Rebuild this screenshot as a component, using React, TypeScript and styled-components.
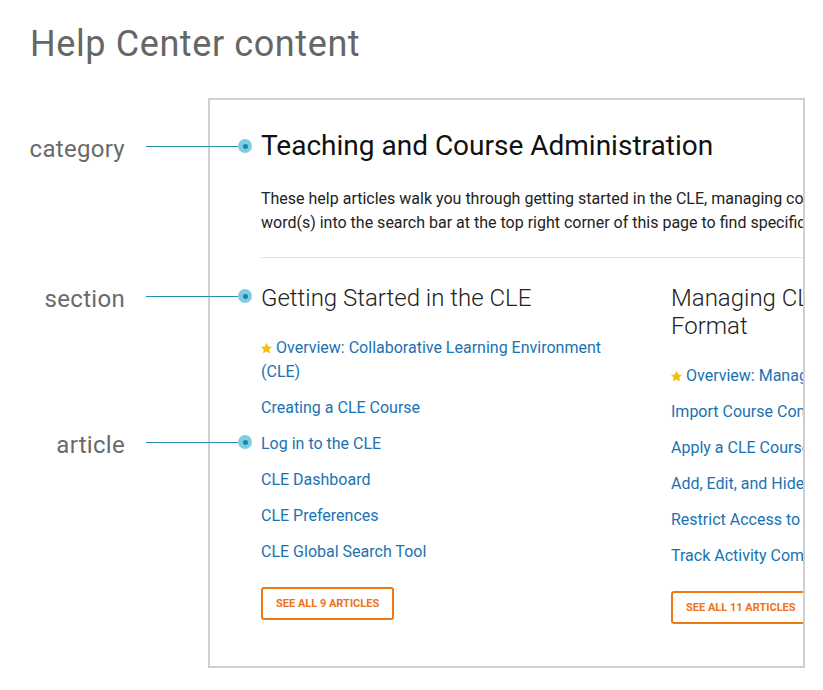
import React from "react";
import styled, { createGlobalStyle } from "styled-components";

interface Section {
  title: string;
  articles: { title: string; promoted?: boolean }[];
  total: number;
}

const sections: Section[] = [
  {
    title: "Getting Started in the CLE",
    total: 9,
    articles: [
      { title: "Overview: Collaborative Learning Environment (CLE)", promoted: true },
      { title: "Creating a CLE Course" },
      { title: "Log in to the CLE" },
      { title: "CLE Dashboard" },
      { title: "CLE Preferences" },
      { title: "CLE Global Search Tool" },
    ],
  },
  {
    title: "Managing CLE Course Content and Format",
    total: 11,
    articles: [
      { title: "Overview: Managing Course Content", promoted: true },
      { title: "Import Course Content" },
      { title: "Apply a CLE Course Template" },
      { title: "Add, Edit, and Hide Content" },
      { title: "Restrict Access to Activities" },
      { title: "Track Activity Completion" },
    ],
  },
];

const annotations = [
  { label: "category", top: 34 },
  { label: "section", top: 184 },
  { label: "article", top: 330 },
];

const Star = () => (
  <StarIcon viewBox="0 0 24 24" aria-hidden>
    <path d="M12 1.5l3.1 6.6 7.1.9-5.2 4.9 1.4 7.1L12 17.5 5.6 21l1.4-7.1L1.8 9l7.1-.9z" />
  </StarIcon>
);

const App: React.FC = () => {
  return (
    <>
      <GlobalStyle />
      <Page>
        <Title>Help Center content</Title>
        <Canvas>
          <Frame>
            <CategoryTitle>Teaching and Course Administration</CategoryTitle>
            <Description>
              These help articles walk you through getting started in the CLE, managing course content, grading, and more. Type key
              <br />
              word(s) into the search bar at the top right corner of this page to find specific articles.
            </Description>
            <Divider />
            <Sections>
              {sections.map((section) => (
                <SectionBlock key={section.title}>
                  <SectionTitle>{section.title}</SectionTitle>
                  <ArticleList>
                    {section.articles.map((article) => (
                      <ArticleItem key={article.title}>
                        <ArticleLink href="#">
                          {article.promoted && <Star />}
                          {article.title}
                        </ArticleLink>
                      </ArticleItem>
                    ))}
                  </ArticleList>
                  <SeeAll>See all {section.total} articles</SeeAll>
                </SectionBlock>
              ))}
            </Sections>
          </Frame>
          {annotations.map((a) => (
            <Annotation key={a.label} style={{ top: a.top }}>
              <AnnotationLabel>{a.label}</AnnotationLabel>
              <Pointer />
              <Dot />
            </Annotation>
          ))}
        </Canvas>
      </Page>
    </>
  );
};

export default App;

const GlobalStyle = createGlobalStyle`
  body {
    margin: 0;
    background: #ffffff;
    font-family: Roboto, "Liberation Sans", sans-serif;
  }
`;

const Page = styled.div`
  width: 823px;
  height: 690px;
  overflow: hidden;
  padding-top: 22px;
  box-sizing: border-box;
`;

const Title = styled.h1`
  margin: 0 0 32px 30px;
  font-size: 36px;
  line-height: 44px;
  font-weight: 400;
  color: #666666;
  letter-spacing: 0.6px;
`;

const Canvas = styled.div`
  position: relative;
  padding-left: 208px;
`;

const Frame = styled.div`
  box-sizing: border-box;
  width: 597px;
  height: 570px;
  border: 2px solid #cfcfcf;
  padding: 28px 0 0 51px;
  overflow: hidden;
`;

const CategoryTitle = styled.h2`
  margin: 0;
  font-size: 28px;
  line-height: 36px;
  font-weight: 400;
  color: #111111;
  white-space: nowrap;
`;

const Description = styled.p`
  margin: 23px 0 0;
  font-size: 16px;
  line-height: 24px;
  color: #222222;
  white-space: nowrap;
`;

const Divider = styled.hr`
  margin: 22px 0 0;
  border: none;
  border-top: 1px solid #e4e4e4;
`;

const Sections = styled.div`
  display: grid;
  grid-template-columns: 350px 440px;
  column-gap: 60px;
  margin-top: 26px;
`;

const SectionBlock = styled.section`
  display: flex;
  flex-direction: column;
  align-items: flex-start;
`;

const SectionTitle = styled.h3`
  margin: 0;
  font-size: 24px;
  line-height: 28px;
  font-weight: 300;
  color: #222222;
`;

const ArticleList = styled.ul`
  list-style: none;
  margin: 24px 0 0;
  padding: 0;
  display: flex;
  flex-direction: column;
  gap: 12px;
`;

const ArticleItem = styled.li`
  font-size: 16px;
  line-height: 24px;
`;

const ArticleLink = styled.a`
  color: #1a72b3;
  text-decoration: none;
`;

const StarIcon = styled.svg`
  width: 13px;
  height: 13px;
  margin-right: 3px;
  margin-left: -1px;
  vertical-align: -2px;
  fill: #f5c000;
`;

const SeeAll = styled.button`
  margin-top: 23px;
  height: 33px;
  padding: 0 13px;
  background: #ffffff;
  border: 2px solid #f07712;
  border-radius: 3px;
  color: #ee7316;
  font-family: Roboto, "Liberation Sans", sans-serif;
  font-size: 11px;
  font-weight: 700;
  letter-spacing: 0;
  text-transform: uppercase;
  white-space: nowrap;
  cursor: pointer;
`;

const Annotation = styled.div`
  position: absolute;
  left: 0;
  height: 28px;
  display: flex;
  align-items: center;
`;

const AnnotationLabel = styled.span`
  width: 125px;
  text-align: right;
  font-size: 24px;
  line-height: 28px;
  color: #6a6a6a;
  letter-spacing: 0.3px;
  padding-top: 6px;
`;

const Pointer = styled.span`
  width: 92px;
  margin-left: 21px;
  height: 1px;
  background: #2a8fb4;
`;

const Dot = styled.span`
  width: 14px;
  height: 14px;
  border-radius: 50%;
  background: #80cde2;
  display: flex;
  align-items: center;
  justify-content: center;

  &::after {
    content: "";
    width: 5px;
    height: 5px;
    border-radius: 50%;
    background: #1787b0;
  }
`;
